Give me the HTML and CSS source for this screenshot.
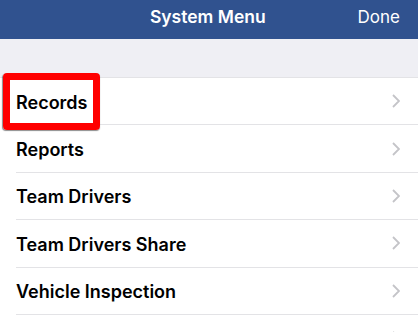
FILE: index.html
```html
<!DOCTYPE html>
<html lang="en">
<head>
    <meta charset="UTF-8">
    <meta name="viewport" content="width=device-width, initial-scale=1.0">
    <title>System Menu</title>
    <link rel="stylesheet" href="styles.css">
</head>
<body>
    <header class="nav-bar">
        <span class="nav-spacer"></span>
        <div class="nav-title">System Menu</div>
        <a href="#" class="nav-done">Done</a>
    </header>

    <div class="section-gap"></div>

    <ul class="menu-list">
        <li class="menu-item">
            <span class="menu-label">Records</span>
            <svg class="chevron" width="8" height="14" viewBox="0 0 8 14"><path d="M1 1l6 6-6 6" fill="none" stroke="#c4c4c8" stroke-width="1.8"/></svg>
            <div class="highlight"></div>
        </li>
        <li class="menu-item">
            <span class="menu-label">Reports</span>
            <svg class="chevron" width="8" height="14" viewBox="0 0 8 14"><path d="M1 1l6 6-6 6" fill="none" stroke="#c4c4c8" stroke-width="1.8"/></svg>
        </li>
        <li class="menu-item">
            <span class="menu-label">Team Drivers</span>
            <svg class="chevron" width="8" height="14" viewBox="0 0 8 14"><path d="M1 1l6 6-6 6" fill="none" stroke="#c4c4c8" stroke-width="1.8"/></svg>
        </li>
        <li class="menu-item">
            <span class="menu-label">Team Drivers Share</span>
            <svg class="chevron" width="8" height="14" viewBox="0 0 8 14"><path d="M1 1l6 6-6 6" fill="none" stroke="#c4c4c8" stroke-width="1.8"/></svg>
        </li>
        <li class="menu-item">
            <span class="menu-label">Vehicle Inspection</span>
            <svg class="chevron" width="8" height="14" viewBox="0 0 8 14"><path d="M1 1l6 6-6 6" fill="none" stroke="#c4c4c8" stroke-width="1.8"/></svg>
        </li>
        <li class="menu-item">
            <span class="menu-label">Diagnostics</span>
            <svg class="chevron" width="8" height="14" viewBox="0 0 8 14"><path d="M1 1l6 6-6 6" fill="none" stroke="#c4c4c8" stroke-width="1.8"/></svg>
        </li>
    </ul>
</body>
</html>
```

FILE: styles.css
```css
body {
    font-family: Inter, "Noto Sans", sans-serif;
    margin: 0;
    padding: 0;
    background-color: #fff;
    overflow: hidden;
}

.nav-bar {
    display: flex;
    align-items: flex-start;
    justify-content: space-between;
    height: 39px;
    padding: 0 18px 0 16px;
    box-sizing: border-box;
    background-color: #30528f;
    color: #fff;
}

.nav-spacer {
    width: 42px;
}

.nav-title {
    font-size: 17.5px;
    font-weight: 600;
    line-height: 34px;
}

.nav-done {
    font-size: 17px;
    line-height: 34px;
    color: #fff;
    text-decoration: none;
}

.section-gap {
    height: 38px;
    background-color: #efeff4;
    border-bottom: 1px solid #e3e3e6;
}

.menu-list {
    list-style: none;
    margin: 0;
    padding: 0;
}

.menu-item {
    position: relative;
    display: flex;
    align-items: center;
    justify-content: space-between;
    height: 47.4px;
    margin-left: 16px;
    padding-right: 18px;
    border-bottom: 1px solid #e3e3e6;
    box-sizing: border-box;
}

.menu-label {
    font-size: 18px;
    font-weight: 600;
    color: #000;
    padding-top: 2px;
}

.chevron {
    display: block;
}

.highlight {
    position: absolute;
    left: -13px;
    top: -5px;
    width: 97px;
    height: 57px;
    border: 7.5px solid #ff0000;
    border-radius: 4px;
    box-sizing: border-box;
    box-shadow: -0.5px 1px 1px rgba(0, 0, 0, 0.45);
}
```
